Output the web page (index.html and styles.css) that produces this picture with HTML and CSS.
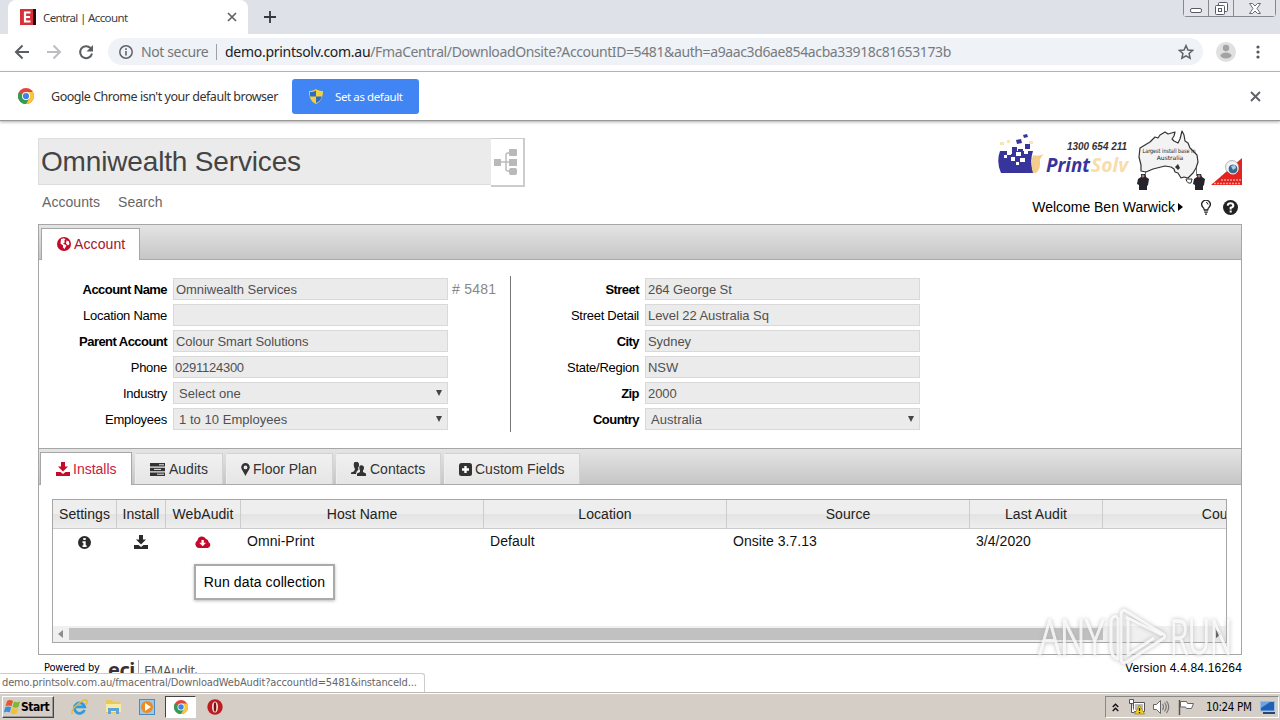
FILE: index.html
```html
<!DOCTYPE html>
<html lang="en">
<head>
<meta charset="utf-8">
<title>Central | Account</title>
<link rel="stylesheet" href="styles.css">
</head>
<body>
<div class="screen">
  <header class="tabstrip">
    <div class="tab">
      <svg class="fav" width="16" height="16" viewBox="0 0 16 16"><path fill="#d7323a" d="M0 0h14v16H0z"/><path fill="#241014" d="M13 0h3v16h-3z"/><path fill="none" stroke="#fff" stroke-width="2.2" d="M10.500 3.500H5v9h5.500M5 8h5"/></svg>
      <span class="tab-title">Central | Account</span>
      <svg class="tab-x" width="10" height="10" viewBox="0 0 10 10"><path stroke="#5f6368" stroke-width="1.700" d="M1 1l8 8M9 1L1 9"/></svg>
    </div>
    <svg class="plus" width="12" height="12" viewBox="0 0 12 12"><path stroke="#35383c" stroke-width="1.800" d="M6 0v12M0 6h12"/></svg>
    <div class="winbtns">
      <span class="wb wb-min"><svg width="12" height="5" viewBox="0 0 12 5"><rect x=".5" y=".5" width="11" height="4" rx="1.500" fill="#fff" stroke="#555a66"/></svg></span>
      <span class="wb wb-max"><svg width="13" height="13" viewBox="0 0 13 13" fill="#fff" stroke="#555a66"><rect x="3.500" y=".5" width="9" height="9" rx="1"/><rect x=".5" y="3.500" width="9" height="9" rx="1"/><rect x="3.500" y="6.500" width="3" height="3"/></svg></span>
      <span class="wb wb-close"><svg width="12" height="11" viewBox="0 0 12 11"><path fill="#fff" stroke="#666b76" d="M.5.500h3L6 3 8.500.500h3L8 5.500l3.500 5h-3L6 8l-2.500 2.500h-3L4 5.500z"/></svg></span>
    </div>
  </header>

  <div class="toolbar">
    <svg class="nav-ic" width="84" height="20" viewBox="0 0 84 20" fill="none" stroke-width="2"><path stroke="#5a5d61" d="M15 10H2M8.500 3.500L2 10l6.500 6.500"/><path stroke="#bcbec1" d="M33 10h13M39.500 3.500L46 10l-6.500 6.500"/><path stroke="#5a5d61" d="M76.500 6A6 6 0 1 0 78 11.500"/><path fill="#5a5d61" stroke="none" d="M79 3v6.500h-6.500z"/></svg>
    <div class="omnibox">
      <svg width="14" height="14" viewBox="0 0 14 14"><circle cx="7" cy="7" r="6.200" fill="none" stroke="#5f6368" stroke-width="1.500"/><path stroke="#5f6368" stroke-width="1.600" d="M7 6v4.500M7 3.300v1.600"/></svg>
      <span class="notsecure">Not secure</span><i class="osep"></i>
      <span class="host">demo.printsolv.com.au</span><span class="path">/FmaCentral/DownloadOnsite?AccountID=5481&amp;auth=a9aac3d6ae854acba33918c81653173b</span>
      <svg class="star" width="16" height="16" viewBox="0 0 14 14"><path fill="none" stroke="#5f6368" stroke-width="1.300" d="M7 1.400l1.700 3.800 4.100.4-3.100 2.700.9 4.100L7 10.300l-3.600 2.100.9-4.100L1.200 5.600l4.100-.4z"/></svg>
    </div>
    <svg class="avatar" width="20" height="20" viewBox="0 0 20 20"><circle cx="10" cy="10" r="10" fill="#e0e0e0"/><circle cx="10" cy="6" r="3.200" fill="#a3a3a3"/><ellipse cx="10" cy="13.500" rx="5.500" ry="3" fill="#a3a3a3"/></svg>
    <svg class="dots" width="4" height="14" viewBox="0 0 4 14" fill="#55585c"><circle cx="2" cy="2" r="1.600"/><circle cx="2" cy="7" r="1.600"/><circle cx="2" cy="12" r="1.600"/></svg>
  </div>

  <div class="infobar">
    <svg class="ib-logo" width="16" height="16" viewBox="0 0 16 16"><use href="#chrome"/></svg>
    <span class="ib-text">Google Chrome isn't your default browser</span>
    <span class="ib-btn"><svg width="14" height="15" viewBox="0 0 14 15"><path fill="#f4d03c" d="M7 0c2 1.500 4.500 2 7 2 0 6-2 11-7 13C2 13 0 8 0 2c2.500 0 5-.5 7-2z"/><path fill="#2d6bc4" d="M7 1.500v6H1.200C1 6 .9 4.500.9 3c2.200 0 4.300-.5 6.100-1.500zM7 7.500h5.800C12.200 10.600 10 13.200 7 14z"/></svg><span>Set as default</span></span>
    <svg class="ib-x" width="11" height="11" viewBox="0 0 11 11"><path stroke="#5f6368" stroke-width="1.900" d="M1 1l9 9M10 1l-9 9"/></svg>
  </div>

  <main class="page">
    <div class="masthead">
      <div class="brand-l">
        <div class="title-row"><h1 class="title">Omniwealth Services</h1>
          <span class="tree"><svg width="25" height="28" viewBox="0 0 25 28"><path fill="none" stroke="#bcbcbc" stroke-width="1.500" d="M6 14h12M18 5h-4q-2 0-2 2v14q0 2 2 2h4"/><g fill="#b9b9b9"><rect x="0" y="11" width="7" height="7"/><rect x="15" y="1" width="8" height="7" rx="1"/><rect x="15" y="11" width="8" height="7"/><rect x="15" y="20" width="8" height="7" rx="2"/></g></svg></span></div>
        <nav class="links"><span>Accounts</span><span>Search</span></nav>
      </div>
      <div class="brand-r">
        <svg class="banner" width="246" height="62" viewBox="0 0 246 62">
          <path fill="#37349b" d="M4 23h7v3h5v-3h6v-2h5v2h10q-4 12 1 22H5q-5-11-1-22z"/>
          <g fill="#37349b"><path d="M27 7l4-1 1 3-4 1zM20 12l5-1 1 4-5 1zM29 16h5v5h-5zM16 19h5v4h-5z"/></g>
          <g fill="#fff"><path d="M11 23h4v4h-4zM20 24h5v4h-5zM28 22h4v4h-4zM15 29h4v4h-4zM24 30h5v4h-5zM20 34h3v3h-3zM8 27h3v3H8z"/></g>
          <g fill="#f6e6b4"><path d="M4 14h4v3H4zM11 12h3v3h-3zM33 13h4v3h-4z"/></g>
          <path fill="#f4cd8c" d="M37 27q5 2 11-1-5 4-4 10 0 6-4 9h-3q-3-9 0-18z"/>
          <text x="71" y="22" class="b-phone" textLength="60" lengthAdjust="spacingAndGlyphs">1300 654 211</text>
          <text x="50" y="44" class="b-print" textLength="44" lengthAdjust="spacingAndGlyphs">Print</text>
          <text x="95" y="44" class="b-solv" textLength="37" lengthAdjust="spacingAndGlyphs">Solv</text>
          <path stroke="#777" d="M149.500 40v9M200.500 39v9"/>
          <path fill="#f3f3f3" stroke="#333" stroke-width="1.200" stroke-linejoin="round" d="M144 20l5-3 5-3 2-2 3-3 3 1 2-3 5-3 3 2 7-2-1 4-2 3 2 2 4 2 2-4 2-8 2 4 1 6 3 2 2 5 4 4 3 3 1 7-2 6-3 5-5 5-4-1-3 1-3-5-3-1-1-3-3-2-6-1-4 1-8 2-7 3-5-1v-6l-2-8z"/>
          <path fill="#333" d="M179 39l3-3 2 4-2 2z"/><path fill="#fff" stroke="#333" d="M190 51h6l-1 4q-4 1-5-4z"/>
          <text x="173" y="25" text-anchor="middle" class="b-map" textLength="53" lengthAdjust="spacingAndGlyphs">Largest install base in</text>
          <text x="174" y="32" text-anchor="middle" class="b-map">Australia</text>
          <g fill="#25232b"><path d="M142 51l3-2v-3h4l1 3 3 2-1 6-1 1v4h-8v-5l-2-1zM198 51l3-2v-3h4l1 3 3 2-1 6-1 1v4h-8v-5l-2-1z"/></g><g fill="#b08070"><circle cx="147" cy="48" r="1.500"/><circle cx="203" cy="48" r="1.500"/></g>
          <path fill="#e2231f" d="M246 30v27h-31z"/><circle cx="236" cy="39" r="6.500" fill="#f3f3f3" stroke="#999" stroke-width=".7"/><circle cx="237" cy="41" r="5" fill="#39688e" stroke="#fff"/><path fill="#a9cee4" d="M235 38l4-1 1 3-3 2z"/><path stroke="#ff9b94" stroke-width="1.500" stroke-dasharray="2 1" d="M225 52h20M218 55.500h27"/>
        </svg>
        <div class="welcome"><span class="w-text">Welcome Ben Warwick</span><svg width="5" height="8" viewBox="0 0 5 8"><path d="M0 0l5 4-5 4z"/></svg>
          <svg class="bulb" width="10" height="15" viewBox="0 0 10 15"><path fill="none" stroke="#222" stroke-width="1.300" d="M3.300 10Q3 8 1.700 7A4.200 4.200 0 1 1 8.300 7Q7 8 6.700 10zM3.200 12.200h3.600M4 14.200h2"/><path fill="none" stroke="#222" d="M5 2.500q2 0 2 2"/></svg>
          <svg class="help" width="15" height="15" viewBox="0 0 16 16"><circle cx="8" cy="8" r="8" fill="#222"/><path fill="none" stroke="#fff" stroke-width="2.200" d="M5 6q.3-2.500 3-2.500t3 2.300Q11 7.300 8.200 8.200V10M8.200 11.200v2.200"/></svg></div>
      </div>
    </div>

    <section class="panel">
      <div class="strip strip1"><div class="ptab ptab-acc"><svg width="14" height="14" viewBox="0 0 14 14"><circle cx="7" cy="7" r="7" fill="#c40a2a"/><path fill="#fff" d="M4 2l3-.7 1.500 1.200L7 4l1 1-2 2 2 .5 1.500 1L7.500 12 6 10.500V8.500L3.500 6.500zM9.500 3.500l2.300.7.700 2.800-1.500 1.500-2-2z"/></svg><span>Account</span></div></div>
      <div class="form">
        <div class="fgrid fg1">
          <label class="b">Account Name</label><span class="field">Omniwealth Services</span>
          <label>Location Name</label><span class="field"></span>
          <label class="b">Parent Account</label><span class="field">Colour Smart Solutions</span>
          <label>Phone</label><span class="field tight">0291124300</span>
          <label>Industry</label><span class="field sel">Select one<i></i></span>
          <label>Employees</label><span class="field sel">1 to 10 Employees<i></i></span>
        </div>
        <span class="num"># 5481</span>
        <span class="rule"></span>
        <div class="fgrid fg2">
          <label class="b">Street</label><span class="field">264 George St</span>
          <label>Street Detail</label><span class="field">Level 22 Australia Sq</span>
          <label class="b">City</label><span class="field">Sydney</span>
          <label>State/Region</label><span class="field">NSW</span>
          <label class="b">Zip</label><span class="field">2000</span>
          <label class="b">Country</label><span class="field sel">Australia<i></i></span>
        </div>
      </div>
      <div class="strip strip2">
        <div class="ptab on t1"><svg width="14" height="14" viewBox="0 0 14 14"><use href="#dl"/></svg><span>Installs</span></div>
        <div class="ptab t2"><svg width="15" height="13" viewBox="0 0 15 13"><path d="M0 0h15v3.500H0zM0 4.700h15v3.500H0zM0 9.400h15V13H0z"/><path stroke="#fff" stroke-width=".9" d="M9 1.800h5M4 6.400h7M7 11.200h7"/></svg><span>Audits</span></div>
        <div class="ptab t3"><svg width="9" height="13" viewBox="0 0 9 13"><path fill-rule="evenodd" d="M4.500 0A4.300 4.300 0 0 1 8.800 4.300C8.800 6 6 10 4.500 13 3 10 .2 6 .2 4.300A4.300 4.300 0 0 1 4.500 0zm0 2.500a1.900 1.900 0 1 0 0 3.800 1.900 1.900 0 0 0 0-3.800z"/></svg><span>Floor Plan</span></div>
        <div class="ptab t4"><svg width="15" height="14" viewBox="0 0 15 14"><path d="M3.500 0h3.200q1.800 1 1.300 4L7 6l.5 1.500Q5 9 5 12H0v-1.500Q3.500 10 4 7L3 5Q2 2 3.500 0z"/><path d="M9 3.500q3-1 4 1.500.3 2-1 3.500v1.500l3 1.500V14H6v-2.500L9 10V8.500Q7.500 5 9 3.500z"/></svg><span>Contacts</span></div>
        <div class="ptab t5"><svg width="13" height="13" viewBox="0 0 13 13"><rect width="13" height="13" rx="2.500"/><path stroke="#fff" stroke-width="2.400" d="M6.500 3v7M3 6.500h7"/></svg><span>Custom Fields</span></div>
      </div>
      <div class="gridwrap">
        <div class="grid">
          <div class="row head"><span class="c">Settings</span><span class="c">Install</span><span class="c">WebAudit</span><span class="c">Host Name</span><span class="c">Location</span><span class="c">Source</span><span class="c">Last Audit</span><span class="c">Country</span></div>
          <div class="row data">
            <span class="c"><svg width="13" height="13" viewBox="0 0 13 13"><circle cx="6.500" cy="6.500" r="6.500" fill="#2b2b2b"/><path fill="#fff" d="M5.300 2h2.400v2H5.300zM4.500 5.200h3.200v4h.9V11H4.500V9.200h.9V7h-.9z"/></svg></span>
            <span class="c"><svg width="14" height="14" viewBox="0 0 14 14" fill="#2b2b2b"><use href="#dl"/></svg></span>
            <span class="c"><svg width="16" height="12" viewBox="0 0 16 12"><path fill="#c40a2a" d="M4 12a4 4 0 0 1-1.500-7.500A4.500 4.500 0 0 1 11 3a3 3 0 0 1 2.500 3 3.200 3.200 0 0 1-.7 6z"/><path fill="#fff" d="M6.500 4h2.300v2.700h2.300L7.700 10.200 4.200 6.700h2.300z"/></svg></span>
            <span class="c">Omni-Print</span><span class="c">Default</span><span class="c">Onsite 3.7.13</span><span class="c">3/4/2020</span><span class="c"></span>
          </div>
          <div class="scroll"><svg width="5" height="8" viewBox="0 0 5 8"><path fill="#8d8d8d" d="M5 0v8L0 4z"/></svg><span class="thumb"></span><svg width="5" height="8" viewBox="0 0 5 8"><path fill="#444" d="M0 0v8l5-4z"/></svg></div>
        </div>
      </div>
    </section>
    <footer class="foot">
      <span class="pow">Powered by</span><span class="eci">eci</span><i></i><span class="fma">FMAudit<small>•</small></span>
      <span class="ver">Version 4.4.84.16264</span>
    </footer>
    <div class="tip">Run data collection</div>
    <div class="status"><span>demo.printsolv.com.au/fmacentral/DownloadWebAudit?accountId=5481&amp;instanceId...</span></div>
    <svg class="mark" width="204" height="70" viewBox="0 0 204 70">
      <text x="6" y="52" textLength="65" lengthAdjust="spacingAndGlyphs">ANY</text>
      <path d="M85 15q-5-2-7 4v26q0 10 7 12V15"/><path d="M91 8q-3 1-3 5v43q0 5 4 5l39-25q2-2-1-4L91 8zM95 17v36l26-17"/><path d="M93 15l36 18"/>
      <text x="137" y="52" textLength="62" lengthAdjust="spacingAndGlyphs">RUN</text>
    </svg>
  </main>

  <div class="taskbar">
    <div class="start"><svg width="17" height="16" viewBox="0 0 17 16"><path fill="#e8572a" d="M3 2q3-2 6 0L7.500 7.200q-3-1.500-6 0z"/><path fill="#7db83a" d="M10 2.500q3 1.500 6 0L14.500 8q-3 1.500-6 0z"/><path fill="#3b8fdc" d="M1.200 8.200q3-1.500 6 0L5.800 13.500q-3-1.500-6 0z"/><path fill="#f5bf2c" d="M8.200 9q3 1.500 6 0l-1.500 5.500q-3 1.500-6 0z"/></svg><span>Start</span></div>
    <div class="quick">
      <svg width="17" height="16" viewBox="0 0 17 16"><path fill="none" stroke="#2f9be0" stroke-width="2.800" d="M13.500 11a5.200 5.200 0 1 1 .2-3.200H4"/><path fill="none" stroke="#efb92e" stroke-width="1.500" d="M1.500 15Q-1 11.500 7 5t9-3q.5 1.500-1 3.500"/></svg>
      <svg width="17" height="16" viewBox="0 0 17 16"><path fill="#e9c95c" d="M1 1h6l1.500 2H15v11H1z"/><path fill="#f8eaa5" d="M1 5h15v8H1z"/><path fill="#59a5dc" d="M3 9h11v6h-3v-3H6v3H3z"/></svg>
      <svg width="16" height="16" viewBox="0 0 16 16"><rect x=".5" y=".5" width="15" height="15" fill="#9cc8ec" stroke="#4d8ac2"/><circle cx="8" cy="8" r="6" fill="#f18a1d"/><path fill="#fff" d="M6 4l6 4-6 4z"/></svg>
      <span class="active"><svg width="14" height="14" viewBox="0 0 16 16"><g id="chrome"><circle cx="8" cy="8" r="8" fill="#e2453a"/><path fill="#2f9e50" d="M1.070 4A8 8 0 0 0 8 16l3.500-6L8 8z"/><path fill="#f8c63b" d="M8 16A8 8 0 0 0 14.930 4H8l3.500 6z"/><circle cx="8" cy="8" r="4" fill="#fff"/><circle cx="8" cy="8" r="3.100" fill="#4180e8"/></g></svg></span>
      <svg width="16" height="16" viewBox="0 0 16 16"><circle cx="8" cy="8" r="7.700" fill="#bd1c20"/><ellipse cx="8" cy="8" rx="3" ry="5.600" fill="#f5e8e6"/><ellipse cx="8" cy="8" rx="1.300" ry="4.800" fill="#7e0e12"/></svg>
    </div>
    <div class="tray">
      <svg width="7" height="9" viewBox="0 0 7 9" fill="none" stroke="#111" stroke-width="1.400"><path d="M.7 4L3.500 1.200 6.300 4M.7 8l2.800-2.800L6.300 8"/></svg>
      <svg class="t-net" width="17" height="16" viewBox="0 0 17 16"><path fill="#fff" stroke="#555" d="M4.500 3.500h11v9h-11z"/><path fill="#bbb" d="M6 5h8v6H6z"/><path fill="#fff" stroke="#555" d="M.5.500h4v4h-4zM2.500 4.500v9h3"/><path fill="#f5cf1c" stroke="#9a8209" stroke-width=".7" d="M10.500 6l5 9h-10z"/><path stroke="#222" stroke-width="1.300" d="M10.500 9v3M10.500 12.900v1.300"/></svg>
      <svg class="t-vol" width="17" height="14" viewBox="0 0 17 14"><path fill="#fff" stroke="#666" d="M.5 4.500h3l4-4v13l-4-4h-3z"/><path fill="none" stroke="#777" stroke-width="1.200" d="M9.500 4q2 3 0 6M11.500 2.500q3.500 4.500 0 9M13.500 1q4.500 6 0 12"/></svg>
      <svg class="t-flag" width="16" height="15" viewBox="0 0 16 15"><path stroke="#555" stroke-width="1.500" d="M1.500 0v15"/><path fill="#fff" stroke="#666" d="M2.500 1.500h6l1 2h6l-2 5h-5l-1-1.500h-5z"/></svg>
      <span class="clock">10:24 PM</span>
      <svg class="t-desk" width="15" height="13" viewBox="0 0 15 13"><path fill="#2161b5" stroke="#99b9dd" d="M.5.500h14v9.500H.5z"/><path fill="#6da5e4" d="M1 1h9L1 7z"/><path fill="#234672" d="M3 11h12v2H3z"/></svg>
    </div>
  </div>
  <svg class="defs" width="0" height="0"><defs><path id="dl" d="M5 0h4v4.500h3L7 9.500 2 4.500h3zM0 10h4.500L7 12l2.500-2H14v4H0z"/></defs></svg>
</div>
</body>
</html>
```
FILE: styles.css
```css
*{box-sizing:border-box}
body{margin:0;overflow:hidden;background:#fff;font-family:"Liberation Sans",Arial,sans-serif}
svg{display:block;flex:none}
span,label{white-space:nowrap}
.screen{width:1280px;height:720px;display:flex;flex-direction:column;overflow:hidden;position:relative}
.defs{position:absolute}

/* browser chrome */
.tabstrip{height:34px;flex:none;background:#dee1e8;display:flex;align-items:flex-start;padding-left:8px}
.tab{width:240px;height:34px;background:#fff;border-radius:8px 8px 0 0;display:flex;align-items:center;padding:0 11px 0 12px}
.tab-title{font:11.500px "Noto Sans",sans-serif;letter-spacing:-.7px;color:#3c4043;margin-left:7px}
.tab-title{letter-spacing:-.62px}
.tab-x{margin-left:auto}
.plus{margin:11px 0 0 16px}
.winbtns{margin:0 4px 0 auto;display:flex;height:17px;border:1px solid #85898f;border-top:0;border-radius:0 0 4px 4px;width:93px}
.wb{display:flex;justify-content:center;border-right:1px solid #85898f;background:#e3e5eb}
.wb-min{width:25px;padding-top:8px}
.wb-max{width:25px;padding-top:2px}
.wb-close{flex:1;border:0;padding-top:3px}
.toolbar{height:38px;flex:none;border-bottom:1px solid #b5b5b5;display:flex;align-items:center;padding:0 20px 2px 14px}
.nav-ic{width:84px}
.omnibox{margin-left:10px;width:1095px;height:27px;border-radius:14px;background:#eff2f6;display:flex;align-items:center;padding:0 9px 0 11px;font:14px "Noto Sans",sans-serif}
.notsecure{width:69px;margin-left:8px;color:#73777b;letter-spacing:-.38px}
.osep{width:1px;height:16px;background:#9ea1a5;margin:0 8px 0 6px}
.host{color:#202124;letter-spacing:-.28px}
.path{color:#777b80;letter-spacing:-.39px}
.star{margin-left:auto}
.avatar{margin-left:13px}
.dots{margin-left:auto}
.infobar{height:49px;flex:none;background:#fff;border-bottom:1px solid #989898;box-shadow:0 1px 3px #aaa;display:flex;align-items:center;padding:0 19px 0 18px;position:relative;z-index:1}
.ib-text{font:12.500px "Noto Sans",sans-serif;letter-spacing:-.47px;color:#333;margin-left:17px;width:241px}
.ib-btn{width:127px;height:35px;background:#4185f4;border-radius:3px;display:flex;align-items:center;padding-left:17px;font:11.500px "Noto Sans",sans-serif;letter-spacing:-.4px;color:#fff}
.ib-btn span{margin-left:12px}
.ib-x{margin-left:auto}

/* page */
.page{height:571px;flex:none;padding:1px 38px 0;position:relative;overflow:hidden;background:#fff}
.masthead{height:102px;display:flex;justify-content:space-between}
.brand-l{padding-top:16px}
.title-row{display:flex;height:49px}
.title{margin:0;width:453px;height:47px;background:#ebebeb;border:1px solid #ddd;border-right:0;padding-left:2px;font-size:28px;font-weight:400;line-height:45px;letter-spacing:-.16px;color:#444}
.tree{width:34px;height:49px;border:solid #ccc;border-width:1px 2px 2px 0;padding:9px 0 0 3px}
.links{display:flex;gap:18px;font-size:14px;color:#666;padding:7px 0 0 4px;letter-spacing:.05px}
.brand-r{width:246px;padding-top:6px;display:flex;flex-direction:column;align-items:flex-end}
.b-phone{font:italic bold 11px "Liberation Sans",sans-serif;fill:#333}
.b-print,.b-solv{font:italic bold 20px "Open Sans",sans-serif;fill:#37349b}
.b-solv{fill:#f8ddaa}
.b-map{font:6px "DejaVu Sans",sans-serif;fill:#222}
.welcome{display:flex;align-items:center;height:20px;margin:7px 4px 0 0}
.w-text{font-size:14px;letter-spacing:-.02px;margin-right:3px}
.bulb{margin-left:18px}
.help{margin-left:12px}
.panel{height:431px;border:1px solid #a6a6a6}
.strip{background:linear-gradient(#e4e4e4,#c6c6c6);border-bottom:1px solid #aaa;display:flex;align-items:flex-end}
.strip1{height:35px;padding-left:2px;color:#a0142c}
.strip2{height:37px;padding-left:1px;border-top:1px solid #a6a6a6}
.ptab{display:flex;align-items:center;font-size:14px}
.ptab span{margin-left:3px}
.ptab-acc{width:99px;height:32px;background:#fff;border:1px solid #a6a6a6;border-bottom:0;margin-bottom:-1px;padding:0 0 1px 15px;letter-spacing:.1px}
.strip2 .ptab{height:31px;background:linear-gradient(#f1f1f1,#e5e5e5);border:1px solid #d2d2d2;border-bottom:0;margin-right:3px;color:#333;fill:#333;padding-left:14px;border-left-color:#eee}
.strip2 .on{height:33px;background:#fff;color:#c8213c;fill:#c40a2a;margin-bottom:-1px;border-color:#a6a6a6;padding-left:15px}
.t1{width:92px}.t2{width:88px}.t3{width:107px}.t4{width:105px}.t5{width:136px}
.strip2 .t2 span,.strip2 .t4 span{margin-left:4px}
.form{height:188px;display:flex;padding-top:16px}
.fgrid{display:grid;grid-auto-rows:22px;row-gap:4px;column-gap:6px;align-items:center;padding-top:2px;align-content:start;grid-template-columns:128px 275px}
.form label{font-size:13px;text-align:right;letter-spacing:-.27px}
.form .b{font-weight:700;letter-spacing:-.55px}
.field{height:22px;background:#ebebeb;border:1px solid #d9d9d9;font-size:13px;line-height:21px;color:#505050;padding:0 0 0 2px;letter-spacing:-.06px}
.tight{letter-spacing:-.25px;padding-left:1px}
.sel{display:flex;justify-content:space-between;align-items:center;padding:0 5px;letter-spacing:.04px}
.sel i{border:3px solid transparent;border-top:6px solid #444;border-bottom:0}
.num{font-size:14px;color:#888;letter-spacing:.25px;width:45px;margin:5px 0 0 4px}
.rule{width:1px;height:156px;background:#777;margin-left:13px}
.gridwrap{padding:14px 13px 0}
.grid{width:1175px;height:144px;border:1px solid #a6a6a6;overflow:hidden;display:flex;flex-direction:column;font-size:14px}
.row{display:grid;grid-template-columns:64px 49px 75px 243px 243px 243px 133px 248px}
.head{height:29px;background:linear-gradient(#eee 50%,#e3e3e3 50%,#eee);border-bottom:1px solid #ccc;color:#222}
.head .c{border-right:1px solid #ccc;text-align:center;line-height:28px;letter-spacing:.05px}
.data{height:25px;color:#111;width:1298px}
.data .c{padding-left:6px;line-height:25px;letter-spacing:.05px}
.data .c:nth-child(-n+3){padding:1px 2px 0 0;display:flex;justify-content:center;align-items:center}
.scroll{height:16px;margin-top:auto;background:#f0f0f0;display:flex;align-items:center;padding:0 5px}
.thumb{width:1034px;height:12px;background:#c1c1c1;margin:0 auto 0 6px}
.foot{display:flex;align-items:flex-start;height:38px;padding:5px 0 0 6px;overflow:hidden}
.pow{font:11px "DejaVu Sans Condensed","DejaVu Sans",sans-serif;letter-spacing:-.15px;width:55px;line-height:15px}
.eci{font:bold 20px/20px "Noto Sans",sans-serif;margin-left:9px;color:#3c3035;width:26px;letter-spacing:-.5px}
.foot i{width:1px;height:18px;background:#aaa;margin-left:4px}
.fma{font:14px/22px "Open Sans",sans-serif;letter-spacing:-.5px;color:#555;margin-left:5px}
.fma small{font-size:7px}
.ver{margin-left:auto;font-size:12px;line-height:16px;letter-spacing:.18px}

/* floating over the page */
.tip{position:absolute;left:194px;top:443px;width:141px;height:36px;border:2px solid #aaa;background:#fff;box-shadow:0 1px 3px #bbb;font-size:14px;line-height:32px;text-align:center;letter-spacing:.12px;white-space:nowrap}
.status{position:absolute;left:0;top:552px;width:425px;height:19px;background:#fff;border:1px solid #ccc;border-width:1px 1px 0 0;border-radius:0 3px 0 0;padding-left:2px;font:11px/18px "DejaVu Sans Condensed","DejaVu Sans",sans-serif;letter-spacing:-.14px;color:#666}
.mark{position:absolute;left:1033px;top:481px;overflow:visible;filter:drop-shadow(0 0 2px #aaa)}
.mark text{font:300 47px "Open Sans",sans-serif;fill:#fff;stroke:#fff;stroke-width:1.500px;opacity:.8}
.mark path{fill:none;stroke:#fff;stroke-width:3;stroke-opacity:.8;stroke-linejoin:round}

/* taskbar */
.taskbar{height:28px;flex:none;background:#d5cec6;border-top:1px solid #bbb8b3;box-shadow:inset 0 1px #fff;display:flex;align-items:center;padding:1px 1px 0 2px}
.start{width:52px;height:22px;border:1px solid;border-color:#fff #444 #444 #fff;box-shadow:inset -1px -1px #999;display:flex;align-items:center;padding-left:1px;font:bold 12px "DejaVu Sans Condensed","DejaVu Sans",sans-serif;letter-spacing:-.5px}
.quick{display:flex;align-items:center;margin-left:17px;gap:17px}
.active{width:31px;height:22px;background:#fff;border:1px solid;border-color:#444 #fff #fff #444;display:flex;justify-content:center;align-items:center;margin:0 -6px 0 -7px}
.tray{margin-left:auto;width:174px;height:22px;border:1px solid;border-color:#888 #fff #fff #888;display:flex;align-items:center;padding-left:6px}
.t-net{margin-left:10px}.t-vol{margin-left:7px}.t-flag{margin-left:8px}
.clock{font:11.500px "DejaVu Sans Condensed","DejaVu Sans",sans-serif;letter-spacing:-.35px;margin-left:12px;width:46px}
.t-desk{margin-left:8px}
```
